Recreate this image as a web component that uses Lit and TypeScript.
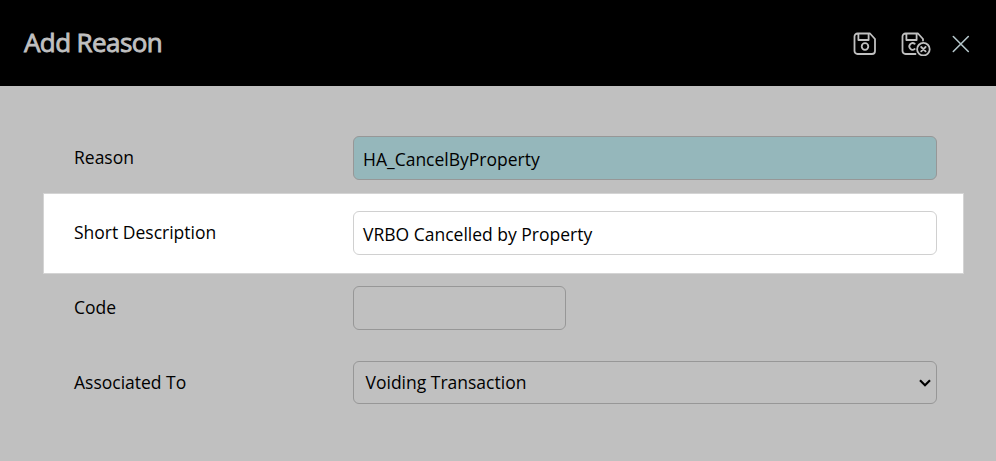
import { LitElement, html, css } from "lit";
import { customElement } from "lit/decorators.js";

@customElement("app-root")
class AppRoot extends LitElement {
  static styles = css`
    :host { display: flex; flex-direction: column; height: 461px; background: #c0c0c0; font: 17.5px/25px "Open Sans", sans-serif; color: #000; overflow: hidden; }
    * { box-sizing: border-box; }
    header { height: 86px; flex: none; background: #000; display: flex; align-items: center; padding: 0 26px 0 24px; }
    h1 { margin: 0; padding-bottom: 2px; flex: 1; font-size: 26px; line-height: 34px; font-weight: 500; color: #c0c0c0; letter-spacing: -0.6px; -webkit-text-stroke: 0.85px #c0c0c0; }
    .icons { display: flex; align-items: center; padding-top: 2px; }
    svg { display: block; fill: none; stroke: #c0c0c0; stroke-width: 1.8; stroke-linejoin: round; stroke-linecap: round; }
    .save { margin-right: 24px; }
    .saveclose { margin-right: 21px; }
    .close { stroke: #b4c6ca; stroke-width: 1.6; }
    main { display: flex; flex-direction: column; padding: 33px 0 0 44px; }
    .row { height: 75px; width: 919px; padding: 17px 26px 0 30px; display: grid; grid-template-columns: 279px 1fr; align-items: start; }
    .row.hl { height: 79px; margin-bottom: -4px; background: #fff; box-shadow: 0 0 0 1px #d4d4d4; }
    .row.hl .field { background: #fff; border-color: #d0d0d0; }
    label { padding-top: 9px; }
    .field { height: 44px; border: 1px solid #979797; border-radius: 6px; padding: 3px 9px 0; display: flex; align-items: center; }
    .teal { background: #95b7bb; }
    .code { width: 213px; }
    .select { height: 43px; padding: 0 5px 0 11.5px; justify-content: space-between; }
    .select svg { stroke: #000; stroke-width: 2.2; stroke-linecap: butt; stroke-linejoin: miter; }
  `;
  render() {
    return html`
      <header><h1>Add Reason</h1><div class="icons">
        <svg class="save" width="24" height="24" viewBox="0 0 24 24"><path d="M4.5 1.5h12.5l5 5.5v12a3 3 0 0 1-3 3H4.5a3 3 0 0 1-3-3V4.5a3 3 0 0 1 3-3zM5.4 2v6h10.2V2"/><circle cx="12" cy="14.5" r="3.3"/></svg>
        <svg class="saveclose" width="30" height="24" viewBox="0 0 30 24"><path d="M14.5 22h-10a3 3 0 0 1-3-3V4.5a3 3 0 0 1 3-3h12.5l5 5.5v1.5M5.4 2v6h10.2V2M13.7 11.8a3.3 3.3 0 1 0 0 5.2"/><circle cx="22.4" cy="17.2" r="6.3"/><path d="M20.2 15l4.4 4.4M24.6 15l-4.4 4.4"/></svg>
        <svg class="close" width="18" height="18" viewBox="0 0 18 18"><path d="M1.3 1.5l15 15M16.3 1.5l-15 15"/></svg>
      </div></header>
      <main>
        <div class="row"><label>Reason</label><div class="field teal">HA_CancelByProperty</div></div>
        <div class="row hl"><label>Short Description</label><div class="field">VRBO Cancelled by Property</div></div>
        <div class="row"><label>Code</label><div class="field code"></div></div>
        <div class="row"><label>Associated To</label><div class="field select">Voiding Transaction<svg width="12" height="8" viewBox="0 0 12 8"><path d="M1 1.2l5 5 5-5"/></svg></div></div>
      </main>`;
  }
}
